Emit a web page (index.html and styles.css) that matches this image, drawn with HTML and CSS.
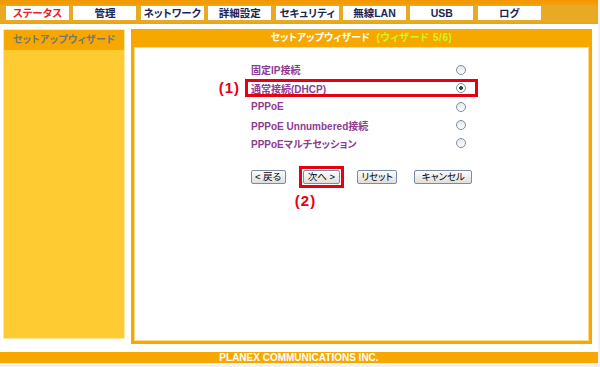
FILE: index.html
```html
<!DOCTYPE html>
<html lang="ja">
  <head>
    <meta charset="UTF-8" />
    <title>セットアップウィザード</title>
    <link rel="stylesheet" href="styles.css">
  </head>
  <body>
    <div class="page">
      <div class="header">
        <ul class="tabs">
          <li class="tab active">ステータス</li>
          <li class="tab">管理</li>
          <li class="tab">ネットワーク</li>
          <li class="tab">詳細設定</li>
          <li class="tab">セキュリティ</li>
          <li class="tab">無線LAN</li>
          <li class="tab">USB</li>
          <li class="tab">ログ</li>
        </ul>
      </div>

      <div class="main">
        <div class="sidebar">
          <div class="side-title">セットアップウィザード</div>
        </div>

        <div class="panel">
          <div class="panel-title">
            セットアップウィザード <span class="step">(ウィザード 5/6)</span>
          </div>
          <div class="panel-body">
            <form class="options">
              <label class="option">固定IP接続<input type="radio" name="wan" value="static" /></label>
              <label class="option marked"
                ><span class="note note-1">(1)</span>通常接続(DHCP)<input type="radio" name="wan" value="dhcp" checked
              /></label>
              <label class="option">PPPoE<input type="radio" name="wan" value="pppoe" /></label>
              <label class="option">PPPoE Unnumbered接続<input type="radio" name="wan" value="unnumbered" /></label>
              <label class="option">PPPoEマルチセッション<input type="radio" name="wan" value="multi" /></label>
            </form>

            <div class="buttons">
              <button type="button" class="btn btn-back">&lt; 戻る</button>
              <span class="marked-btn">
                <button type="button" class="btn btn-next">次へ &gt;</button>
                <span class="note note-2">(2)</span>
              </span>
              <button type="button" class="btn btn-reset">リセット</button>
              <button type="button" class="btn btn-cancel">キャンセル</button>
            </div>
          </div>
        </div>
      </div>

      <div class="footer">PLANEX COMMUNICATIONS INC.</div>
    </div>
  </body>
</html>
```

FILE: styles.css
```css
* {
  box-sizing: border-box;
}
body {
  margin: 0;
  background: #f2f2f2;
  font-family: "Liberation Sans", "Noto Sans CJK JP", sans-serif;
  font-size: 10px;
  font-feature-settings: "palt";
}
.page {
  width: 598px;
  background: #fff;
}

/* top menu */
.header {
  height: 24px;
  padding: 6px 0 0 6px;
  background: linear-gradient(#f39600 0, #f29e08 4px, #e8aa25 6px, #e8aa25 22px, #f0a00c 24px);
}
.tabs {
  display: flex;
  gap: 4.4px;
  margin: 0;
  padding: 0;
  list-style: none;
}
.tab {
  width: 63px;
  height: 14px;
  background: #fff;
  color: #1c2553;
  font-weight: bold;
  font-size: 10.5px;
  line-height: 14px;
  text-align: center;
}
.tab.active {
  color: #ee1c25;
}

.main {
  display: flex;
  gap: 6px;
  padding: 5px 0 0 3px;
}

/* left menu */
.sidebar {
  width: 122px;
  height: 310px;
  background: #ffcb33;
  border: 1px solid #ffe7a0;
}
.side-title {
  height: 20px;
  background: #f6a800;
  color: #767676;
  font-weight: bold;
  font-size: 10px;
  line-height: 20px;
  letter-spacing: 0.3px;
  text-align: center;
}

/* wizard panel */
.panel {
  display: flex;
  flex-direction: column;
  width: 461px;
  height: 315px;
  padding: 0 3px 3px;
  background: #f6a800;
}
.panel-title {
  height: 18px;
  line-height: 18px;
  color: #fff;
  font-weight: bold;
  text-align: center;
}
.step {
  margin-left: 4px;
  color: #ccf52c;
  letter-spacing: 0.6px;
}
.panel-body {
  flex: 1;
  display: flex;
  flex-direction: column;
  align-items: center;
  padding-top: 12.7px;
  background: #fff;
  border: 1px solid #ffd98c;
}

.options {
  width: 233px;
  margin: 0;
}
.option {
  position: relative;
  display: flex;
  align-items: center;
  justify-content: space-between;
  height: 18.4px;
  padding: 0 12px 0 6px;
  color: #8e3b91;
  font-weight: bold;
}
.option.marked {
  outline: 3px solid #e50012;
  outline-offset: -3px;
}
.option input {
  appearance: none;
  width: 10px;
  height: 10px;
  margin: 0;
  border: 1px solid #7b8fa6;
  border-radius: 50%;
  background: linear-gradient(#e2e6ec, #fff);
}
.option input:checked {
  background: radial-gradient(circle, #2f4a2f 0 1.6px, #fff 2.2px);
}

.note {
  position: absolute;
  color: #e50012;
  font-weight: bold;
  font-size: 15px;
  line-height: 18px;
  letter-spacing: 1px;
  white-space: nowrap;
}
.note-1 {
  right: calc(100% + 5px);
  top: 0;
}
.note-2 {
  left: -8px;
  top: 22px;
}

.buttons {
  display: flex;
  gap: 17.3px;
  margin-top: 17.3px;
}
.marked-btn {
  position: relative;
  display: flex;
  outline: 3px solid #e50012;
  outline-offset: 1px;
}
.btn {
  height: 14px;
  padding: 0;
  border: 1px solid #7a8ba3;
  border-radius: 2px;
  background: linear-gradient(#fdfdfd, #dedede);
  color: #000;
  font-family: "Liberation Sans", "Noto Sans CJK JP", sans-serif;
  font-size: 9.5px;
  font-feature-settings: "palt";
  line-height: 12px;
  white-space: nowrap;
  overflow: visible;
}
.btn-back {
  width: 35px;
}
.btn-next {
  width: 37px;
}
.btn-reset {
  width: 40px;
}
.btn-cancel {
  width: 58px;
}

.footer {
  height: 11px;
  margin-top: 8px;
  background: #f6a800;
  color: #fff;
  font-weight: bold;
  font-size: 10px;
  line-height: 11px;
  text-align: center;
}
```
